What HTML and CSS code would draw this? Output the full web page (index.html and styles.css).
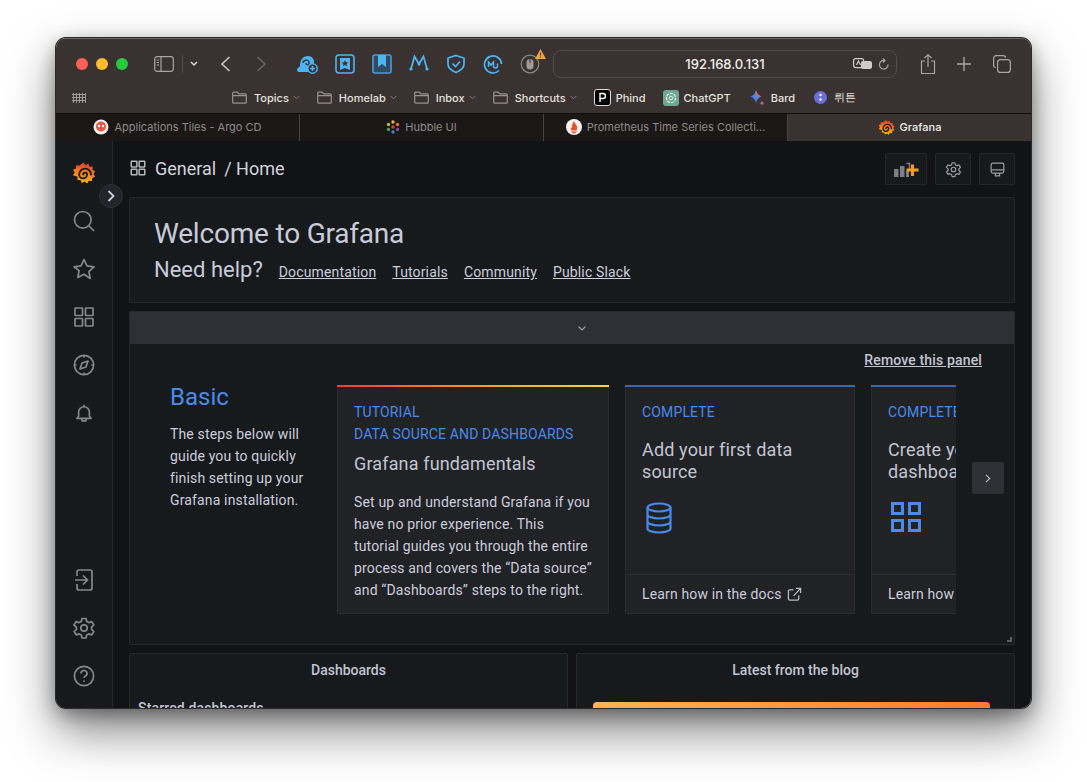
FILE: index.html
```html
<!DOCTYPE html>
<html lang="en">
<head>
  <meta charset="UTF-8" />
  <title>Grafana</title>
  <link rel="stylesheet" href="styles.css">
</head>
<body>
  <svg width="0" height="0" class="defs">
    <defs>
      <linearGradient id="gf" x1="0" y1="1" x2="0.2" y2="0">
        <stop offset="0" stop-color="#fcc30f"/>
        <stop offset="0.55" stop-color="#f5821f"/>
        <stop offset="1" stop-color="#e8402a"/>
      </linearGradient>
      <symbol id="grid" viewBox="0 0 24 24">
        <rect x="3" y="3" width="7.5" height="7.5" rx="0.5"/><rect x="13.5" y="3" width="7.5" height="7.5" rx="0.5"/>
        <rect x="3" y="13.5" width="7.5" height="7.5" rx="0.5"/><rect x="13.5" y="13.5" width="7.5" height="7.5" rx="0.5"/>
      </symbol>
      <symbol id="cog" viewBox="0 0 24 24">
        <path d="M10 2.5h4l.7 3 2.2 1.1 2.9-1 2 3.4-2.2 2.1v2.3l2.2 2.1-2 3.4-2.9-1-2.2 1.1-.7 3h-4l-.7-3-2.2-1.1-2.9 1-2-3.4 2.2-2.1v-2.3L2 9l2-3.4 2.9 1L9.3 5.5z" stroke-linejoin="round"/>
        <circle cx="12" cy="12" r="3.2"/>
      </symbol>
      <symbol id="folder" viewBox="0 0 15 13">
        <path d="M.7 11.2V2.2q0-1 1-1h3.6l1.4 1.6h6.6q1 0 1 1v7.4q0 1-1 1H1.700q-1 0-1-1zM.7 4.6h13.6"/>
      </symbol>
      <symbol id="logo" viewBox="0 0 24 24">
        <path fill="url(#gf)" d="M11.500 1.500l2 2.500 3-1.500 1 3.200 3.300-.1-.2 3.200 2.700 1.600-1.800 2.600 1.600 2.800-2.900 1.200-.3 3.200-3.100-.5-1.700 2.700-2.500-2-2.800 1.500-1.200-3-3.200.1.200-3.200L1 14.200l1.700-2.700L1 8.800l3-1.300.2-3.200 3.100.5z"/>
        <path fill="none" stroke="#171a1d" stroke-width="1.900" stroke-linecap="round" d="M11.200 13.500a1.900 1.900 0 0 1 3.800 0a3.900 3.900 0 0 1-7.800 0a5.900 5.900 0 0 1 11.800 0"/>
      </symbol>
    </defs>
  </svg>

  <div class="window">
    <header class="toolbar">
      <div class="toolbar-top">
        <div class="lights"><i class="red"></i><i class="yellow"></i><i class="green"></i></div>
        <svg class="tb-icon sidebar-btn" width="20" height="16" viewBox="0 0 20 16"><rect x=".7" y=".7" width="18.6" height="14.6" rx="2.5"/><path d="M7 .7v14.6M2.500 4h2.500M2.500 6.500h2.500M2.500 9h2.500"/></svg>
        <span class="tb-sep"></span>
        <svg class="tb-icon chev" width="8" height="6" viewBox="0 0 8 6"><path d="M1 1l3 3 3-3" stroke-width="1.5"/></svg>
        <svg class="tb-icon back" width="11" height="16" viewBox="0 0 11 16"><path d="M9.500 1L2 8l7.500 7" stroke-width="1.6"/></svg>
        <svg class="tb-icon forward" width="11" height="16" viewBox="0 0 11 16"><path d="M1.500 1L9 8l-7.500 7" stroke-width="1.6"/></svg>

        <div class="extensions">
          <svg class="ext" width="22" height="20" viewBox="0 0 22 20"><path class="ext-fill" d="M1 16c0-2 2.500-2.500 3-4 0-6 3-10 8-10 4 0 6 3 6 6l-1 3c-2 2-3 5-3 7H4c-2 0-3-.500-3-2z"/><path d="M7 9c0-3 5-4 6-1s-3 4-3 1" stroke="#3a3230" stroke-width="1.400" fill="none"/><circle cx="16.500" cy="14.500" r="4.700" fill="#3a3230" stroke="#4db4f5" stroke-width="1.500"/><path d="M14 14.500h5M16.500 12v5" stroke="#4db4f5" stroke-width="1.500"/></svg>
          <svg class="ext" width="20" height="20" viewBox="0 0 20 20"><rect x="1" y="1" width="18" height="18" rx="3" fill="none" stroke="#4db4f5" stroke-width="1.600"/><path class="ext-fill" d="M5 4h10v12l-5-2-5 2z"/><path d="M10 6l1 2.200 2.300.2-1.700 1.600.5 2.300-2.100-1.200-2.100 1.200.5-2.300-1.700-1.600 2.300-.2z" fill="#3a3230"/></svg>
          <svg class="ext" width="20" height="20" viewBox="0 0 20 20"><rect x="1" y="1" width="18" height="18" rx="2" fill="#2f4a63" stroke="#4d9ad8" stroke-width="1.600"/><path class="ext-fill" d="M6 1h8v12l-4-3-4 3z"/></svg>
          <svg class="ext" width="20" height="18" viewBox="0 0 20 18"><path d="M2 15L5.500 2.500 10 10l4.500-7.500L18 15" fill="none" stroke="#4db4f5" stroke-width="1.700"/><circle class="ext-fill" cx="2" cy="15" r="1.600"/><circle class="ext-fill" cx="10" cy="10" r="1.500"/><circle class="ext-fill" cx="18" cy="15" r="1.600"/></svg>
          <svg class="ext" width="20" height="20" viewBox="0 0 20 20"><path d="M10 1.500l8 2.500v6c0 4-3 6.500-8 8.500-5-2-8-4.500-8-8.500V4z" fill="none" stroke="#4db4f5" stroke-width="1.700"/><path d="M6.500 9.500l3 3 4.500-5" fill="none" stroke="#4db4f5" stroke-width="1.700"/></svg>
          <svg class="ext" width="20" height="20" viewBox="0 0 20 20"><path d="M16 16.500A8.500 8.500 0 1 1 18.500 10" fill="none" stroke="#4db4f5" stroke-width="1.700"/><path d="M5.500 13V8l2.500 3 2.500-3v4q0 2 2 2t2-2V9.500" fill="none" stroke="#4db4f5" stroke-width="1.500"/></svg>
          <span class="mouse-ext">
            <svg width="20" height="20" viewBox="0 0 20 20"><circle cx="10" cy="10" r="8.800" fill="none" stroke="#8d8783" stroke-width="1.200"/><rect x="6.500" y="5" width="7" height="10.500" rx="3.500" fill="#a09a96"/><path d="M10 5v4" stroke="#3a3230"/></svg>
            <svg class="warn" width="11" height="10" viewBox="0 0 11 10"><path d="M5.500 0L11 10H0z" fill="#f2a33a"/><path d="M5.500 3.500v3M5.500 7.500v1" stroke="#3a3230"/></svg>
          </span>
        </div>

        <div class="urlbar">
          <span class="url-text">192.168.0.131</span>
          <svg class="tb-icon translate" width="20" height="13" viewBox="0 0 20 13"><rect x=".6" y=".6" width="10" height="9" rx="2"/><rect x="8" y="3" width="11" height="8" rx="2" fill="#cfcbc8" stroke="none"/><path d="M3.500 7l2-4 2 4"/></svg>
          <svg class="tb-icon reload" width="11" height="12" viewBox="0 0 11 12"><path d="M6.500 2.500A4.300 4.300 0 1 0 10 6.500M5 .5l2 2-2 2"/></svg>
        </div>

        <svg class="tb-icon share" width="16" height="21" viewBox="0 0 16 21"><path d="M5 7H1.500v12.500h13V7H11M8 13V1M4.500 4L8 .8 11.500 4"/></svg>
        <svg class="tb-icon plus" width="14" height="14" viewBox="0 0 14 14"><path d="M7 0v14M0 7h14" stroke-width="1.400"/></svg>
        <svg class="tb-icon copies" width="18" height="18" viewBox="0 0 18 18"><rect x="4.600" y="4.600" width="12.800" height="12.800" rx="3"/><path d="M2.800 12.500Q.6 12.500.6 10V3.500Q.6.6 3.500.6H10Q12.500.6 12.500 2.800"/></svg>
      </div>

      <nav class="favbar">
        <span class="apps"></span>
        <a class="fav fav-folder fav-first"><svg class="tb-icon folder"><use href="#folder"/></svg>Topics<svg class="fav-chev" width="7" height="5" viewBox="0 0 7 5"><path d="M.5.8L3.500 3.800 6.500.8"/></svg></a>
        <a class="fav fav-folder"><svg class="tb-icon folder"><use href="#folder"/></svg>Homelab<svg class="fav-chev" width="7" height="5" viewBox="0 0 7 5"><path d="M.5.8L3.500 3.800 6.500.8"/></svg></a>
        <a class="fav fav-folder"><svg class="tb-icon folder"><use href="#folder"/></svg>Inbox<svg class="fav-chev" width="7" height="5" viewBox="0 0 7 5"><path d="M.5.8L3.500 3.800 6.500.8"/></svg></a>
        <a class="fav fav-folder"><svg class="tb-icon folder"><use href="#folder"/></svg>Shortcuts<svg class="fav-chev" width="7" height="5" viewBox="0 0 7 5"><path d="M.5.8L3.500 3.800 6.500.8"/></svg></a>
        <a class="fav"><svg width="17" height="17" viewBox="0 0 17 17"><rect x=".5" y=".5" width="16" height="16" rx="2.500" fill="#000" stroke="#ddd"/><path d="M6 13V4.500h3a2.500 2.500 0 0 1 0 5H6" fill="none" stroke="#fff" stroke-width="1.400"/></svg>Phind</a>
        <a class="fav"><svg width="16" height="16" viewBox="0 0 16 16"><rect width="16" height="16" rx="3" fill="#6fa795"/><circle cx="8" cy="8" r="4.600" fill="none" stroke="#e8f2ee" stroke-width="1.200" stroke-dasharray="3 1"/><circle cx="8" cy="8" r="1.800" fill="none" stroke="#e8f2ee"/></svg>ChatGPT</a>
        <a class="fav fav-bard"><svg width="15" height="18" viewBox="0 0 15 18"><path d="M6 1q1 5 5.500 6.500Q7 9 6 14q-1-5-5.500-6.500Q5 6 6 1z" fill="#4d80e8"/><path d="M6 1q1 5 5.500 6.500L6 7.500z" fill="#d9655b"/><path d="M12 11.500q.4 2 2.500 2.500-2 .5-2.500 2.500-.5-2-2.500-2.500 2-.5 2.500-2.500z" fill="#b85a8f"/></svg>Bard</a>
        <a class="fav fav-wrtn"><svg width="13" height="13" viewBox="0 0 13 13"><circle cx="6.500" cy="6.500" r="6.500" fill="#6a6fdc"/><circle cx="6.500" cy="4" r="1.200" fill="#fff"/><circle cx="6.500" cy="8.500" r="1.200" fill="#fff"/></svg>뤼튼</a>
      </nav>
    </header>

    <div class="tabs">
      <div class="tab">
        <svg width="16" height="16" viewBox="0 0 16 16"><circle cx="8" cy="8" r="7.500" fill="#eee"/><circle cx="8" cy="7.500" r="5" fill="#e8573f"/><circle cx="6" cy="7" r="1.200" fill="#fff"/><circle cx="10" cy="7" r="1.200" fill="#fff"/></svg>
        Applications Tiles - Argo CD
      </div>
      <div class="tab">
        <svg width="14" height="14" viewBox="0 0 14 14"><circle cx="7" cy="7" r="1.800" fill="#e0392f"/><circle cx="7" cy="2" r="1.700" fill="#f4b43a"/><circle cx="11.500" cy="4.500" r="1.700" fill="#e8743a"/><circle cx="11.500" cy="9.500" r="1.700" fill="#7a4fa8"/><circle cx="7" cy="12" r="1.700" fill="#3f7fcf"/><circle cx="2.500" cy="9.500" r="1.700" fill="#43a35a"/><circle cx="2.500" cy="4.500" r="1.700" fill="#a8c23c"/></svg>
        Hubble UI
      </div>
      <div class="tab">
        <svg width="16" height="16" viewBox="0 0 16 16"><circle cx="8" cy="8" r="8" fill="#f4f1ee"/><path d="M8 2q.5 2 2 3.500t1.200 3.500 -.700 2H5.500q-1-1-.7-3 .5 1 1.200 1 -.7-3 2-7z" fill="#e6522c"/><rect x="5" y="11.500" width="6" height="1" fill="#e6522c"/><path d="M6 13h4l-1 1.500H7z" fill="#e6522c"/></svg>
        Prometheus Time Series Collecti...
      </div>
      <div class="tab tab-active">
        <svg width="17" height="17"><use href="#logo"/></svg>
        Grafana
      </div>
    </div>

    <div class="app">
      <aside class="sidemenu">
        <svg class="logo" width="24" height="24"><use href="#logo"/></svg>
        <button class="expand">
          <svg width="8" height="12" viewBox="0 0 8 12"><path d="M1.500 1l5 5-5 5" fill="none" stroke="#ccccdc" stroke-width="1.800"/></svg>
        </button>
        <svg class="side-icon" viewBox="0 0 24 24"><circle cx="10.800" cy="10.800" r="8.300"/><path d="M17 17l5 5"/></svg>
        <svg class="side-icon" viewBox="0 0 24 24"><path d="M12 2.500l3 6.400 7 .9-5.100 4.800 1.300 6.900L12 17.200l-6.200 3.300 1.300-6.900L2 9.800l7-.9z" stroke-linejoin="round"/></svg>
        <svg class="side-icon"><use href="#grid"/></svg>
        <svg class="side-icon" viewBox="0 0 24 24"><circle cx="12" cy="12" r="9.600"/><path d="M16 8l-2 6-6 2 2-6z" stroke-linejoin="round"/><path d="M12 2.500v2M12 19.500v2M2.500 12h2M19.500 12h2"/></svg>
        <svg class="side-icon side-bell" viewBox="-2.500 -2.500 29 29"><path d="M5.500 16v-5a6.500 6.500 0 0 1 13 0v5l2 2.500H3.500zM12 4.500V2M9.500 19v2.500h5V19" stroke-linejoin="round"/></svg>
        <div class="side-spacer"></div>
        <svg class="side-icon" viewBox="0 0 24 24"><path d="M5 8V4q0-2 2-2h11q2 0 2 2v16q0 2-2 2H7q-2 0-2-2v-4M3 12h12M11 7.500l4.500 4.500-4.500 4.500"/></svg>
        <svg class="side-icon"><use href="#cog"/></svg>
        <svg class="side-icon" viewBox="0 0 24 24"><circle cx="12" cy="12" r="9.600"/><path d="M9 9.500a3 3 0 1 1 4.500 2.500q-1.500.8-1.500 2M12 16.500v1.500"/></svg>
      </aside>

      <main class="main">
        <div class="navbar">
          <svg class="crumb-icon"><use href="#grid"/></svg>
          <span class="crumb">General</span>
          <span class="crumb crumb-sep">/ Home</span>
          <div class="nav-actions">
            <button class="nav-btn nav-btn-wide">
              <svg width="28" height="17" viewBox="0 0 28 17"><path d="M2 8h4.500v8H2zM8 5h4.500v11H8zM14 10h3v6h-3z" fill="#7b7f85"/><path d="M14.500 2.500h3v6" fill="none" stroke="#7b7f85" stroke-width="1.500"/><path d="M19 3.500h3v4h4.500v3H22v4.500h-3v-4.500h-4.500v-3H19z" fill="#f59b22"/></svg>
            </button>
            <button class="nav-btn"><svg class="nav-icon"><use href="#cog"/></svg></button>
            <button class="nav-btn"><svg class="nav-icon" viewBox="0 0 24 24"><rect x="3" y="3" width="18" height="14" rx="2.500"/><path d="M3 12.500h18M9 17v4h6v-4"/></svg></button>
          </div>
        </div>

        <section class="panel welcome">
          <h1>Welcome to Grafana</h1>
          <div class="help">
            <h2>Need help?</h2>
            <a>Documentation</a><a>Tutorials</a><a>Community</a><a>Public Slack</a>
          </div>
        </section>

        <section class="panel getting-started">
          <div class="collapse-bar">
            <svg width="8" height="5" viewBox="0 0 8 5"><path d="M.5.5l3.500 3.500L7.500.5" fill="none" stroke="#9a9da3" stroke-width="1.200"/></svg>
          </div>
          <div class="remove-row"><a>Remove this panel</a></div>
          <div class="steps">
            <div class="basic">
              <h3>Basic</h3>
              <p>The steps below will guide you to quickly finish setting up your Grafana installation.</p>
            </div>
            <div class="cards">
              <article class="card card-tutorial">
                <div class="card-body">
                  <div class="card-label">TUTORIAL<br>DATA SOURCE AND DASHBOARDS</div>
                  <h4>Grafana fundamentals</h4>
                  <p>Set up and understand Grafana if you have no prior experience. This tutorial guides you through the entire process and covers the “Data source” and “Dashboards” steps to the right.</p>
                </div>
              </article>
              <article class="card card-step">
                <div class="card-body">
                  <div class="card-label">COMPLETE</div>
                  <h4>Add your first data source</h4>
                  <svg class="card-icon" viewBox="0 0 30 32"><ellipse cx="15" cy="5.500" rx="11.500" ry="4"/><path d="M3.500 5.500v21c0 2.200 5 4 11.500 4s11.500-1.800 11.500-4v-21M3.500 12.500c0 2.200 5 4 11.500 4s11.500-1.800 11.500-4M3.500 19.500c0 2.200 5 4 11.500 4s11.500-1.800 11.500-4M8 14.500h.5M8 22h.5"/></svg>
                </div>
                <div class="card-foot">Learn how in the docs
                  <svg class="ext-link" viewBox="0 0 16 16"><path d="M7 3H3q-1.500 0-1.500 1.500v8Q1.500 14 3 14h8q1.500 0 1.500-1.500V9M7 9.500L14.500 1.500M9.500 1.500h5v5"/></svg>
                </div>
              </article>
              <article class="card card-step">
                <div class="card-body">
                  <div class="card-label">COMPLETE</div>
                  <h4>Create your first dashboard</h4>
                  <svg class="card-icon card-icon-grid" viewBox="0 0 30 30"><rect x="1.500" y="1.500" width="10" height="10"/><rect x="18.500" y="1.500" width="10" height="10"/><rect x="1.500" y="18.500" width="10" height="10"/><rect x="18.500" y="18.500" width="10" height="10"/></svg>
                </div>
                <div class="card-foot">Learn how in the docs</div>
              </article>
            </div>
            <button class="next">
              <svg width="6" height="9" viewBox="0 0 6 9"><path d="M1 .8l3.700 3.700L1 8.200" fill="none" stroke="#b5b7bd" stroke-width="1.200"/></svg>
            </button>
          </div>
          <span class="resize"></span>
        </section>

        <div class="bottom-row">
          <section class="panel list-panel">
            <div class="panel-title">Dashboards</div>
            <div class="starred">Starred dashboards</div>
          </section>
          <section class="panel list-panel">
            <div class="panel-title">Latest from the blog</div>
            <div class="blog-banner"></div>
          </section>
        </div>
      </main>
    </div>
  </div>
</body>
</html>
```

FILE: styles.css
```css
:root {
  --bar: #3a3230;
  --canvas: #111316;
  --panel: #171a1d;
  --card: #202226;
  --line: #26292e;
  --text: #ccccdc;
  --blue: #4a8ae8;
}

* { box-sizing: border-box; }

body {
  margin: 0;
  padding: 38px 56px 0;
  height: 782px;
  overflow: hidden;
  background: #fff;
  font-family: 'Roboto', sans-serif;
  color: var(--text);
}

.defs { position: absolute; }

.window {
  width: 975px;
  height: 670px;
  border-radius: 10px;
  overflow: hidden;
  display: flex;
  flex-direction: column;
  box-shadow: 0 0 0 1px #2b2b2b, 0 6px 18px rgba(0,0,0,0.35), 0 22px 48px rgba(0,0,0,0.5);
}

/* safari chrome */
.toolbar {
  height: 75px;
  flex: none;
  background: var(--bar);
  border-top: 1px solid #6b6563;
}

.toolbar-top {
  height: 46px;
  display: flex;
  align-items: center;
  padding: 4px 0 0 20px;
}

.tb-icon {
  fill: none;
  stroke: #a9a4a1;
  stroke-width: 1.2;
  flex: none;
}

.lights { display: flex; gap: 8px; }
.lights i { width: 12px; height: 12px; border-radius: 50%; }
.red { background: #fe5f57; }
.yellow { background: #febc2e; }
.green { background: #27c93f; }

.sidebar-btn { margin-left: 26px; }
.tb-sep { width: 1px; height: 18px; background: #534c4a; margin-left: 8px; }
.chev { margin-left: 7px; stroke: #d8d5d3; }
.back { margin-left: 22px; stroke: #c9c5c2; }
.forward { margin-left: 25px; stroke: #6a6563; }

.extensions {
  display: flex;
  margin-left: 29px;
}
.ext { margin-right: 17px; flex: none; }
.ext-fill { fill: #4db4f5; }
.mouse-ext { position: relative; display: block; height: 20px; flex: none; }
.warn { position: absolute; top: -5px; right: -6px; }

.urlbar {
  width: 344px;
  height: 28px;
  margin-left: 13px;
  border: 1px solid #524b49;
  border-radius: 8px;
  display: flex;
  align-items: center;
  position: relative;
  padding-left: 299px;
  gap: 5px;
}
.url-text {
  position: absolute;
  left: 0;
  right: 0;
  text-align: center;
  font: 500 13px 'Inter', sans-serif;
  color: #f1efee;
}
.translate { stroke: #cfcbc8; }

.share { margin-left: 23px; }
.plus { margin-left: 21px; }
.copies { margin-left: 22px; }

.favbar {
  height: 28px;
  display: flex;
  align-items: center;
  font: 500 11px 'Inter', sans-serif;
  color: #e4e1df;
  padding: 0 0 3px 16px;
}
.apps {
  width: 14px;
  height: 10px;
  flex: none;
  background: radial-gradient(circle, #a09a97 1px, transparent 1.1px) 0 0 / 3px 3px;
}
.fav {
  display: flex;
  align-items: center;
  gap: 5px;
  margin-right: 17px;
  white-space: nowrap;
}
.fav-folder { gap: 7px; }
.fav-first { margin-left: 146px; }
.fav-bard { gap: 6px; margin-left: 2px; margin-right: 19px; }
.fav-wrtn { gap: 7px; }
.folder { width: 15px; height: 13px; stroke: #97928f; }
.fav-chev { fill: none; stroke: #857f7c; margin-left: -3px; }

.tabs {
  height: 28px;
  flex: none;
  display: flex;
  background: #1b1717;
  border-top: 1px solid #0e0c0c;
  font: 400 11px 'Inter', sans-serif;
  color: #8e8a88;
}
.tab {
  flex: 1;
  display: flex;
  align-items: center;
  justify-content: center;
  gap: 5px;
  padding-bottom: 1px;
  border-right: 1px solid #4a4543;
  white-space: nowrap;
}
.tab-active {
  background: var(--bar);
  color: #f1efee;
  font-weight: 500;
  border-right: 0;
  flex: 0 0 243px;
}

/* grafana */
.app {
  flex: 1;
  min-height: 0;
  display: flex;
  background: var(--canvas);
}

.sidemenu {
  width: 57px;
  flex: none;
  background: var(--panel);
  border-right: 1px solid #25282c;
  display: flex;
  flex-direction: column;
  align-items: center;
  padding: 20px 0;
  gap: 24px;
  position: relative;
}
.logo { flex: none; }
.side-icon {
  width: 24px;
  height: 24px;
  flex: none;
  fill: none;
  stroke: #85878d;
  stroke-width: 1.7;
}
.side-bell { stroke-width: 2; }
.side-spacer { flex: 1; }
.expand {
  position: absolute;
  top: 43px;
  left: 43px;
  width: 24px;
  height: 24px;
  border-radius: 50%;
  border: 1px solid #2e3136;
  background: #22252a;
  padding: 0;
  display: flex;
  align-items: center;
  justify-content: center;
  z-index: 2;
}

.main {
  flex: 1;
  min-width: 0;
  padding: 0 16px;
  overflow: hidden;
  letter-spacing: .15px;
}

.navbar {
  height: 56px;
  display: flex;
  align-items: center;
  font-size: 18px;
  letter-spacing: 0;
  color: #d2d3de;
  padding-bottom: 2px;
}
.crumb-icon {
  width: 18px;
  height: 18px;
  fill: none;
  stroke: #b5b7bd;
  stroke-width: 2;
  margin-right: 8px;
}
.crumb-sep { margin-left: 8px; }
.nav-actions { margin: 2px 0 0 auto; display: flex; gap: 8px; }
.nav-btn {
  width: 36px;
  height: 32px;
  padding: 0;
  border: 1px solid #24272c;
  border-radius: 2px;
  background: var(--panel);
  display: flex;
  align-items: center;
  justify-content: center;
}
.nav-btn-wide { width: 42px; }
.nav-icon { width: 17px; height: 17px; fill: none; stroke: #9a9da3; stroke-width: 1.7; }

.panel {
  background: var(--panel);
  border: 1px solid var(--line);
  border-radius: 2px;
}

.welcome {
  height: 106px;
  padding: 20px 24px 0;
  margin-bottom: 8px;
}
.welcome h1 {
  margin: 0;
  font-size: 28px;
  font-weight: 400;
  line-height: 32px;
  letter-spacing: -.2px;
  color: #c9cad8;
}
.help {
  display: flex;
  align-items: baseline;
  margin-top: 7px;
  font-size: 14px;
}
.help h2 {
  margin: 0 16px 0 0;
  font-size: 22px;
  font-weight: 400;
  line-height: 26px;
  letter-spacing: 0;
  color: #c9cad8;
}
.help a { margin-right: 16px; text-decoration: underline; }

.getting-started {
  height: 334px;
  position: relative;
  margin-bottom: 8px;
}
.collapse-bar {
  height: 32px;
  background: #2d3135;
  display: flex;
  align-items: center;
  justify-content: center;
  padding-left: 20px;
}
.remove-row {
  text-align: right;
  padding: 8px 32px 0 0;
  font-size: 14px;
  line-height: 16px;
  font-weight: 500;
  color: #c3c4d2;
}
.remove-row a { text-decoration: underline; }

.steps {
  display: flex;
  padding: 17px 0 0 40px;
  position: relative;
}
.basic { width: 167px; flex: none; margin-top: -2px; }
.basic h3 {
  margin: 0 0 12px;
  font-size: 24px;
  font-weight: 400;
  line-height: 28px;
  letter-spacing: 0;
  color: var(--blue);
}
.basic p {
  margin: 0;
  font-size: 14px;
  line-height: 22px;
  width: 150px;
}

.cards {
  width: 619px;
  display: flex;
  gap: 16px;
  overflow: hidden;
  flex: none;
}
.card {
  height: 229px;
  flex: none;
  display: flex;
  flex-direction: column;
  background: var(--card);
  border: 1px solid #2a2c31;
  border-top: 0;
  border-radius: 2px;
  font-size: 14px;
}
.card::before {
  content: "";
  height: 2px;
  flex: none;
  margin: 0 -1px;
  background: #3866b5;
}
.card-tutorial { width: 272px; }
.card-tutorial::before { background: linear-gradient(90deg, #d9472f, #f2a53a 60%, #f7cf5c); }
.card-step { width: 230px; }
.card-body { flex: 1; padding: 14px 16px 0; }
.card-label {
  line-height: 22px;
  color: var(--blue);
}
.card h4 {
  margin: 8px 0 16px;
  font-size: 18px;
  font-weight: 400;
  line-height: 22px;
  color: #c3c4d2;
}
.card-step h4 { margin-top: 16px; margin-bottom: 19px; }
.card-body p { margin: 0; width: 238px; line-height: 22px; font-size: 14px; }
.card-icon {
  display: block;
  width: 30px;
  height: 32px;
  margin-left: 2px;
  fill: none;
  stroke: var(--blue);
  stroke-width: 2.2;
}
.card-icon-grid { height: 30px; margin-left: 3px; stroke-width: 3; }
.card-foot {
  height: 39px;
  flex: none;
  display: flex;
  align-items: center;
  gap: 5px;
  padding: 0 16px;
  border-top: 1px solid #2c2e33;
  white-space: nowrap;
}
.ext-link { width: 15px; height: 15px; fill: none; stroke: #b8b9c6; stroke-width: 1.4; }

.next {
  position: absolute;
  left: 842px;
  top: 94px;
  width: 32px;
  height: 32px;
  padding: 0;
  border: 0;
  border-radius: 2px;
  background: #2d3135;
  display: flex;
  align-items: center;
  justify-content: center;
}

.resize {
  position: absolute;
  right: 2px;
  bottom: 2px;
  width: 5px;
  height: 5px;
  border-right: 2px solid #5b5e63;
  border-bottom: 2px solid #5b5e63;
}

.bottom-row {
  display: grid;
  grid-template-columns: 1fr 1fr;
  gap: 8px;
}
.list-panel { height: 120px; }
.panel-title {
  font-size: 14px;
  font-weight: 500;
  line-height: 16px;
  letter-spacing: 0;
  text-align: center;
  padding-top: 8px;
  color: #c3c4d2;
}
.starred {
  margin: 22px 0 0 8px;
  font-size: 14px;
  font-weight: 500;
  color: #c3c4d2;
}
.blog-banner {
  height: 60px;
  margin: 24px 24px 0 16px;
  border-radius: 4px 4px 0 0;
  background: linear-gradient(90deg, #fdb454, #fb7a30);
}
```
